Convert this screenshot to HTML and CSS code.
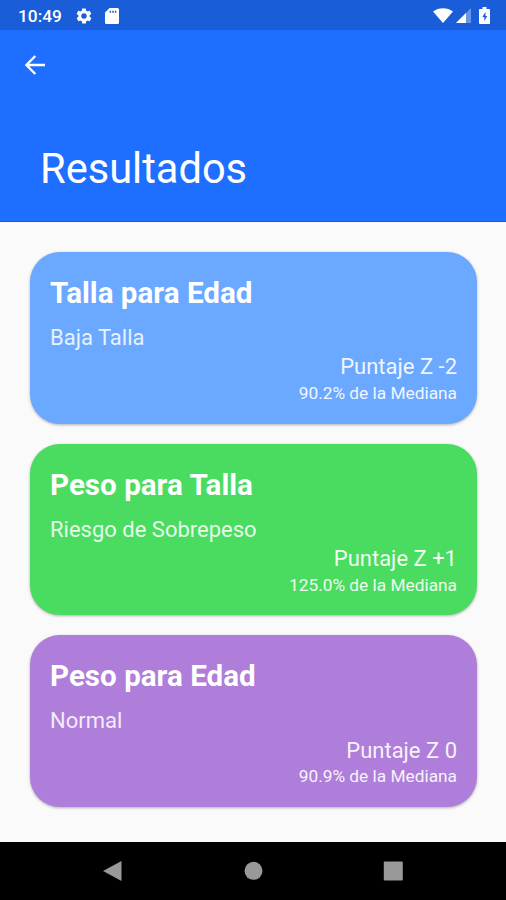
FILE: index.html
```html
<!DOCTYPE html>
<html lang="es">
<head>
  <meta charset="UTF-8">
  <meta name="viewport" content="width=device-width, initial-scale=1.0">
  <title>Resultados</title>
  <link rel="stylesheet" href="styles.css">
</head>
<body>

  <div class="status-bar">
    <span class="clock">10:49</span>
    <svg class="gear" width="18" height="18" viewBox="0 0 24 24"><path d="M19.4 13c0-.3.1-.6.1-1s0-.7-.1-1l2.1-1.6c.2-.1.3-.4.1-.6l-2-3.5c-.1-.2-.4-.3-.6-.2l-2.5 1c-.5-.4-1.1-.7-1.7-1l-.4-2.6c0-.3-.2-.5-.4-.5h-4c-.3 0-.5.2-.5.4l-.4 2.7c-.6.2-1.1.6-1.7 1l-2.5-1c-.2-.1-.5 0-.6.2l-2 3.5c-.1.2 0 .5.2.6L4.6 11c0 .3-.1.6-.1 1s0 .7.1 1l-2.1 1.6c-.2.1-.2.4-.1.6l2 3.5c.1.2.4.3.6.2l2.5-1c.5.4 1.1.7 1.7 1l.4 2.6c0 .3.2.5.5.5h4c.2 0 .4-.2.5-.4l.3-2.7c.6-.2 1.2-.6 1.7-1l2.5 1c.2.1.5 0 .6-.2l2-3.5c.1-.2.1-.5-.1-.6zM12 15.6a3.6 3.6 0 1 1 0-7.2 3.6 3.6 0 0 1 0 7.2z"/></svg>
    <svg class="sd-card" width="14" height="16" viewBox="0 0 14 16"><path fill-rule="evenodd" d="M4.500 0h8A1.500 1.500 0 0 1 14 1.500v13a1.500 1.500 0 0 1-1.500 1.500h-11A1.500 1.500 0 0 1 0 14.500V4.500zM4.600 2.800v2h1.500v-2zM7.200 2.800v2h1.500v-2zM9.800 2.800v2h1.500v-2z"/></svg>
    <svg class="wifi" width="20" height="15" viewBox="0 0 20 15"><path d="M0 3.500C5.500-1 14.500-1 20 3.500L10 15z"/></svg>
    <svg class="signal" width="15" height="15" viewBox="0 0 15 15"><path d="M15 0v15H0z" opacity=".35"/><path d="M10 5v10H0z"/></svg>
    <svg class="battery" width="11" height="17" viewBox="0 0 11 17"><path fill-rule="evenodd" d="M3.500 0h4v2H10a1 1 0 0 1 1 1v13a1 1 0 0 1-1 1H1a1 1 0 0 1-1-1V3a1 1 0 0 1 1-1h2.500zM6.500 5 3.300 10h2v4l3-5H6.500z"/></svg>
  </div>

  <header class="app-bar">
    <svg class="back" width="20" height="20" viewBox="0 0 20 20"><path d="M20 10H2M10.300 1 1.400 10l8.900 9"/></svg>
    <h1>Resultados</h1>
  </header>

  <main class="results">
    <section class="card height-age">
      <h2>Talla para Edad</h2>
      <p class="status">Baja Talla</p>
      <p class="score">Puntaje Z -2</p>
      <p class="median">90.2% de la Mediana</p>
    </section>
    <section class="card weight-height">
      <h2>Peso para Talla</h2>
      <p class="status">Riesgo de Sobrepeso</p>
      <p class="score">Puntaje Z +1</p>
      <p class="median">125.0% de la Mediana</p>
    </section>
    <section class="card weight-age">
      <h2>Peso para Edad</h2>
      <p class="status">Normal</p>
      <p class="score">Puntaje Z 0</p>
      <p class="median">90.9% de la Mediana</p>
    </section>
  </main>

  <nav class="nav-bar">
    <svg width="20" height="22" viewBox="0 0 20 22"><path d="M18.500 1v20L0 11z"/></svg>
    <svg width="20" height="22" viewBox="0 0 20 22"><circle cx="10.500" cy="10.800" r="9"/></svg>
    <svg width="20" height="22" viewBox="0 0 20 22"><rect x=".8" y="1.500" width="19" height="19" rx="1"/></svg>
  </nav>

</body>
</html>
```
FILE: styles.css
```css
* {
  box-sizing: border-box;
}

body {
  margin: 0;
  height: 900px;
  display: flex;
  flex-direction: column;
  background-color: #fafafa;
  color: #fff;
  font-family: Roboto, sans-serif;
  overflow: hidden;
}

h1, h2, p {
  margin: 0;
}

svg {
  display: block;
  fill: #fff;
}

.status-bar {
  height: 30px;
  padding: 1px 16px 0 18px;
  display: flex;
  align-items: center;
  background-color: #1a5dd9;
}

.clock {
  width: 44px;
  font-size: 17.3px;
  font-weight: 500;
  line-height: 30px;
}

.gear {
  margin-left: 13px;
}

.sd-card {
  margin-left: 12px;
}

.wifi {
  margin-left: auto;
}

.signal {
  margin-left: 3px;
}

.battery {
  margin-left: 8px;
}

.app-bar {
  height: 192px;
  padding: 24.5px 25px 0;
  background-color: #1e6fff;
  border-bottom: 1px solid #0d5be6;
}

.back {
  fill: none;
  stroke: #fff;
  stroke-width: 2.4;
}

h1 {
  margin: 69.5px 0 0 15px;
  font-size: 41.6px;
  font-weight: 400;
  line-height: 50px;
}

.results {
  flex: 1;
  padding: 30px 29px 0 30px;
  display: flex;
  flex-direction: column;
  gap: 20px;
}

.card {
  height: 171.6px;
  padding: 21px 20px 0;
  border-radius: 30px;
  box-shadow: 0 1px 3px rgba(0, 0, 0, 0.3);
}

.height-age {
  background-color: #6ba8ff;
}

.weight-height {
  background-color: #4adc60;
}

.weight-age {
  background-color: #af7dda;
}

h2 {
  font-size: 29.6px;
  font-weight: 700;
  line-height: 41px;
}

.status {
  margin-top: 11px;
  font-size: 22px;
  line-height: 26px;
  opacity: 0.85;
}

.score {
  margin-top: 3.4px;
  font-size: 22px;
  line-height: 26px;
  text-align: right;
  opacity: 0.9;
}

.median {
  margin-top: 2.6px;
  font-size: 17.3px;
  line-height: 20px;
  text-align: right;
  opacity: 0.9;
}

.nav-bar {
  height: 58px;
  padding: 0 103px;
  display: flex;
  align-items: center;
  justify-content: space-between;
  background-color: #000;
}

.nav-bar svg {
  fill: #999;
}
```
